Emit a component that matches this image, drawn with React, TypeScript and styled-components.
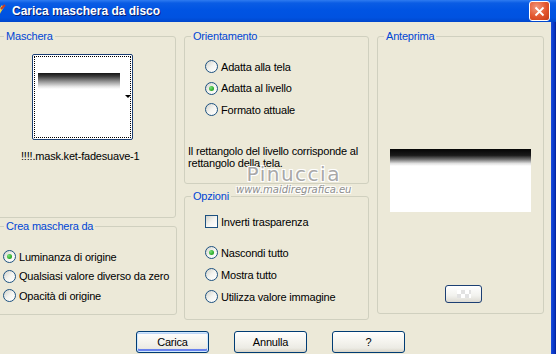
import React from "react";
import styled, { createGlobalStyle } from "styled-components";

const Global = createGlobalStyle`
  html, body { margin: 0; padding: 0; background: #ECE9D8; overflow: hidden; }
  body { font-family: "Liberation Sans", Arial, sans-serif; font-size: 11px; color: #000; letter-spacing: -0.2px; }
`;

const Window = styled.div`
  position: relative;
  width: 556px;
  height: 354px;
  overflow: hidden;
  display: flex;
  flex-direction: column;
  background: #ECE9D8;
`;

const TitleBar = styled.div`
  height: 22px;
  flex: none;
  display: flex;
  align-items: center;
  background: linear-gradient(to bottom, #2E7BF0 0%, #0A5CE4 14%, #0054E3 45%, #0052E0 80%, #0046CC 100%);
  position: relative;
`;

const TitleIcon = styled.svg`
  position: absolute;
  left: -6px;
  top: 4px;
`;

const Title = styled.span`
  margin-left: 12px;
  font-family: "Liberation Sans", Arial, sans-serif;
  font-weight: bold;
  font-size: 12px;
  letter-spacing: 0;
  color: #fff;
  text-shadow: 1px 1px 0 #0A1E6E;
`;

const CloseButton = styled.div`
  position: absolute;
  left: 529px;
  top: 1px;
  width: 21px;
  height: 20px;
  box-sizing: border-box;
  border: 1px solid #fff;
  border-radius: 3px;
  background: radial-gradient(circle at 35% 30%, #F1977C 0%, #E2552E 55%, #C43A16 100%);
  display: flex;
  align-items: center;
  justify-content: center;
`;

const Frame = styled.div`
  flex: 1;
  display: flex;
`;

const Body = styled.div`
  flex: 1;
  display: flex;
  flex-direction: column;
  padding-top: 8px;
`;

const SideBorder = styled.div`
  width: 5px;
  flex: none;
  background: linear-gradient(to right, #1F4ED8 0%, #0A3CCF 40%, #0830B8 80%, #001C8C 100%);
`;

const Columns = styled.div`
  display: flex;
  align-items: flex-start;
  margin-left: -3px;
`;

const Column = styled.div<{ $gap: number; $ml?: number }>`
  display: flex;
  flex-direction: column;
  gap: ${(p) => p.$gap}px;
  margin-left: ${(p) => p.$ml ?? 0}px;
`;

const Group = styled.fieldset<{ $w: number; $h: number }>`
  box-sizing: border-box;
  width: ${(p) => p.$w}px;
  height: ${(p) => p.$h}px;
  margin: 0;
  padding: 0;
  min-inline-size: 0;
  border: 1px solid #D0D0BF;
  border-radius: 3px;
  display: flex;
  flex-direction: column;
`;

const Legend = styled.legend`
  color: #0046D5;
  padding: 0 2px;
  margin-left: 6px;
  font-size: 11px;
  line-height: 13px;
`;

const Content = styled.div<{ $pt: number; $pl: number }>`
  display: flex;
  flex-direction: column;
  align-items: flex-start;
  padding-top: ${(p) => p.$pt}px;
  padding-left: ${(p) => p.$pl}px;
`;

const Thumb = styled.div`
  margin-left: 34px;
  width: 101px;
  height: 86px;
  box-sizing: border-box;
  border: 1px solid #1C3F73;
  border-radius: 2px;
  background: #fff;
  padding: 1px;
  position: relative;
`;

const ThumbFocus = styled.div`
  width: 100%;
  height: 100%;
  box-sizing: border-box;
  border: 1px dotted #000;
  padding: 16px 0 0 3px;
`;

const ThumbGradient = styled.div`
  width: 82px;
  height: 16px;
  background: linear-gradient(to bottom, #141414 0%, #3A3A3A 20%, #9A9A9A 55%, #E6E6E6 85%, #FFFFFF 100%);
`;

const DropArrow = styled.div`
  position: absolute;
  left: 92px;
  top: 40px;
  width: 0;
  height: 0;
  border-left: 3px solid transparent;
  border-right: 3px solid transparent;
  border-top: 3px solid #000;
`;

const MaskName = styled.div`
  margin-left: 23px;
  margin-top: 10px;
  line-height: 13px;
`;

const OptRow = styled.label<{ $h: number }>`
  display: flex;
  align-items: center;
  gap: 3px;
  height: ${(p) => p.$h}px;
  white-space: nowrap;
`;

const RadioCircle = styled.span<{ $checked?: boolean }>`
  position: relative;
  width: 13px;
  height: 13px;
  flex: none;
  box-sizing: border-box;
  border-radius: 50%;
  border: 1px solid #1C5180;
  background: linear-gradient(135deg, #D2D2CA 0%, #F4F4F0 50%, #FFFFFF 100%);
  &::after {
    content: "";
    display: ${(p) => (p.$checked ? "block" : "none")};
    position: absolute;
    left: 3px;
    top: 3px;
    width: 5px;
    height: 5px;
    border-radius: 50%;
    background: radial-gradient(circle at 35% 35%, #7BE07A 0%, #2FAE2D 60%, #1F8F1E 100%);
  }
`;

const CheckSquare = styled.span`
  width: 13px;
  height: 13px;
  flex: none;
  box-sizing: border-box;
  border: 1px solid #1C5180;
  background: linear-gradient(135deg, #D2D2CA 0%, #F4F4F0 50%, #FFFFFF 100%);
`;

const Spacer = styled.div<{ $h: number }>`
  height: ${(p) => p.$h}px;
`;

const Note = styled.div`
  margin-top: 24px;
  line-height: 12px;
  white-space: nowrap;
`;

const PreviewContent = styled.div`
  display: flex;
  flex-direction: column;
  align-items: center;
  padding-top: 106px;
`;

const Preview = styled.div`
  width: 141px;
  height: 63px;
  background: linear-gradient(to bottom, #050505 0%, #1A1A1A 10%, #7A7A7A 17%, #E0E0E0 23%, #FFFFFF 27%, #FFFFFF 100%);
`;

const SmallButton = styled.div`
  margin-top: 73px;
  margin-left: 6px;
  width: 37px;
  height: 18px;
  box-sizing: border-box;
  border: 1px solid #1C3F73;
  border-radius: 3px;
  background: linear-gradient(to bottom, #FFFFFF 0%, #F2F2EE 60%, #DCDAD2 100%);
  display: flex;
  align-items: center;
  justify-content: center;
`;

const Checker = styled.div`
  width: 14px;
  height: 8px;
  background-color: #fff;
  background-image:
    linear-gradient(45deg, #E2E2E2 25%, transparent 25%, transparent 75%, #E2E2E2 75%),
    linear-gradient(45deg, #E2E2E2 25%, transparent 25%, transparent 75%, #E2E2E2 75%);
  background-size: 8px 8px;
  background-position: 0 0, 4px 4px;
`;

const ButtonRow = styled.div`
  display: flex;
  gap: 25px;
  padding-left: 136px;
  margin-top: 11px;
`;

const PushButton = styled.button<{ $default?: boolean }>`
  width: 73px;
  height: 22px;
  box-sizing: border-box;
  border: 1px solid #003C74;
  border-radius: 3px;
  background: linear-gradient(to bottom, #FFFFFF 0%, #F5F4EF 45%, #ECEBE4 80%, #D8D4C8 100%);
  font-family: "Liberation Sans", Arial, sans-serif;
  font-size: 11px;
  letter-spacing: -0.2px;
  color: #000;
  padding: 0;
  box-shadow: ${(p) =>
    p.$default
      ? "inset 0 0 0 1px #CEE7FF, inset 0 -2px 0 1px #6982EE, inset 0 2px 0 0 #BCD4F6"
      : "none"};
`;

const Watermark = styled.div`
  position: absolute;
  left: 236px;
  top: 165px;
  display: flex;
  flex-direction: column;
  align-items: center;
  pointer-events: none;
`;

const WatermarkName = styled.span`
  font-family: "DejaVu Sans", sans-serif;
  font-size: 20px;
  line-height: 19px;
  letter-spacing: 1.5px;
  color: #A8A8A8;
  text-shadow: -1px -1px 0 #fff, 1px -1px 0 #fff, -1px 1px 0 #fff, 1px 1px 0 #fff;
`;

const WatermarkUrl = styled.span`
  font-family: "DejaVu Sans", sans-serif;
  font-style: italic;
  font-size: 10px;
  line-height: 11px;
  letter-spacing: 0;
  color: #8E8E8E;
  text-shadow: -1px -1px 0 #fff, 1px -1px 0 #fff, -1px 1px 0 #fff, 1px 1px 0 #fff;
`;

function Radio({ label, checked, h }: { label: string; checked?: boolean; h: number }) {
  return (
    <OptRow $h={h}>
      <RadioCircle $checked={checked} />
      <span>{label}</span>
    </OptRow>
  );
}

export default function App() {
  return (
    <>
      <Global />
      <Window>
        <TitleBar>
          <TitleIcon width="12" height="14" viewBox="0 0 12 14">
            <path d="M2 13 L9 2" stroke="#E8D24A" strokeWidth="3" />
            <path d="M7 5 L11 1" stroke="#C83A2A" strokeWidth="2" />
          </TitleIcon>
          <Title>Carica maschera da disco</Title>
          <CloseButton>
            <svg width="11" height="11" viewBox="0 0 11 11">
              <path d="M1.5 1.5 L9.5 9.5 M9.5 1.5 L1.5 9.5" stroke="#fff" strokeWidth="1.8" />
            </svg>
          </CloseButton>
        </TitleBar>
        <Frame>
          <Body>
            <Columns>
              <Column $gap={2}>
                <Group $w={179} $h={188}>
                  <Legend>Maschera</Legend>
                  <Content $pt={11} $pl={0}>
                    <Thumb>
                      <ThumbFocus>
                        <ThumbGradient />
                      </ThumbFocus>
                      <DropArrow />
                    </Thumb>
                    <MaskName>!!!!.mask.ket-fadesuave-1</MaskName>
                  </Content>
                </Group>
                <Group $w={180} $h={95}>
                  <Legend>Crea maschera da</Legend>
                  <Content $pt={14} $pl={5}>
                    <Radio h={19.5} checked label="Luminanza di origine" />
                    <Radio h={19.5} label="Qualsiasi valore diverso da zero" />
                    <Radio h={19.5} label="Opacità di origine" />
                  </Content>
                </Group>
              </Column>
              <Column $gap={5.5} $ml={7}>
                <Group $w={185} $h={154}>
                  <Legend>Orientamento</Legend>
                  <Content $pt={13} $pl={20}>
                    <Radio h={21.5} label="Adatta alla tela" />
                    <Radio h={21.5} checked label="Adatta al livello" />
                    <Radio h={21.5} label="Formato attuale" />
                  </Content>
                  <Content $pt={0} $pl={3}>
                    <Note>
                      Il rettangolo del livello corrisponde al
                      <br />
                      rettangolo della tela.
                    </Note>
                  </Content>
                </Group>
                <Group $w={185} $h={130}>
                  <Legend>Opzioni</Legend>
                  <Content $pt={8} $pl={20}>
                    <OptRow $h={22}>
                      <CheckSquare />
                      <span>Inverti trasparenza</span>
                    </OptRow>
                    <Spacer $h={9} />
                    <Radio h={22} checked label="Nascondi tutto" />
                    <Radio h={22} label="Mostra tutto" />
                    <Radio h={22} label="Utilizza valore immagine" />
                  </Content>
                </Group>
              </Column>
              <Column $gap={0} $ml={8}>
                <Group $w={167} $h={284}>
                  <Legend>Anteprima</Legend>
                  <PreviewContent>
                    <Preview />
                    <SmallButton>
                      <Checker />
                    </SmallButton>
                  </PreviewContent>
                </Group>
              </Column>
            </Columns>
            <ButtonRow>
              <PushButton $default>Carica</PushButton>
              <PushButton>Annulla</PushButton>
              <PushButton>?</PushButton>
            </ButtonRow>
          </Body>
          <SideBorder />
        </Frame>
        <Watermark>
          <WatermarkName>Pinuccia</WatermarkName>
          <WatermarkUrl>www.maidiregrafica.eu</WatermarkUrl>
        </Watermark>
      </Window>
    </>
  );
}
